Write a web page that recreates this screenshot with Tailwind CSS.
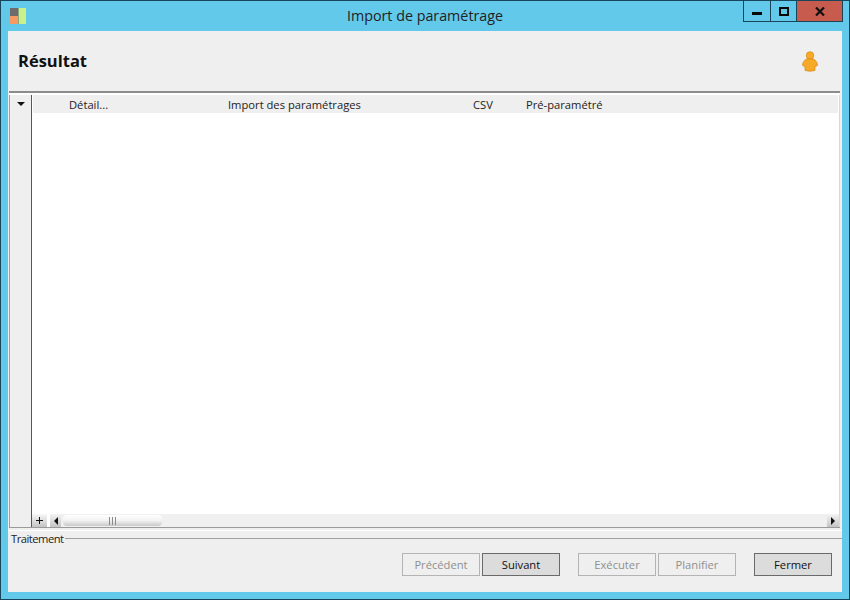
<!DOCTYPE html>
<html lang="fr">
<head>
    <meta charset="UTF-8">
    <script src="https://cdn.jsdelivr.net/npm/@tailwindcss/browser@4"></script>
    <title>Import de paramétrage</title>
</head>
<body class="bg-[#63c9ea] overflow-hidden">
    <div class="w-[850px] h-[600px] flex flex-col bg-[#63c9ea] border border-[#17455a] font-['Open_Sans','Noto_Sans',sans-serif] text-[#111]">

        <!-- title bar -->
        <div class="h-[30px] shrink-0 grid grid-cols-[1fr_auto_1fr] items-start">
            <div class="pl-[8px] pt-[6px]">
                <svg width="18" height="18" viewBox="0 0 18 18">
                    <rect x="1" y="1" width="8" height="8" fill="#6d6b6b"/>
                    <rect x="1" y="9" width="8" height="8" fill="#f59a62"/>
                    <rect x="9" y="1" width="8" height="16" fill="#c8f08c"/>
                    <rect x="9" y="1" width="1" height="16" fill="#86a878"/>
                </svg>
            </div>
            <p class="text-[14.3px] leading-[19px] pt-[5px] text-[#222]">Import de paramétrage</p>
            <div class="flex justify-end pr-[6px]">
                <div class="flex h-[21px] border border-t-0 border-[#17455a]">
                    <div class="w-[27px] border-r border-[#17455a] flex items-center justify-center">
                        <div class="w-[10px] h-[3px] bg-[#0a0a0a] mt-[4px]"></div>
                    </div>
                    <div class="w-[26px] border-r border-[#17455a] flex items-center justify-center">
                        <div class="w-[10px] h-[9px] border-2 border-[#0a0a0a] mt-[1px]"></div>
                    </div>
                    <div class="w-[45px] bg-[#c75b4e] flex items-center justify-center">
                        <svg width="10" height="9" viewBox="0 0 10 9"><path d="M1 0.5 L9 8.5 M9 0.5 L1 8.5" stroke="#111" stroke-width="2.2" fill="none"/></svg>
                    </div>
                </div>
            </div>
        </div>

        <!-- client area -->
        <div class="flex-1 mx-[7px] mb-[7px] bg-[#efefef] flex flex-col min-h-0">

            <!-- header -->
            <div class="h-[60px] shrink-0 flex items-center justify-between pl-[10px] pr-[24px]">
                <p class="text-[16.5px] font-bold leading-[22px] mt-[-1px] text-[#111]">Résultat</p>
                <svg width="16" height="21" viewBox="0 0 16 21">
                    <circle cx="8" cy="4.5" r="3.8" fill="#f7a928" stroke="#d68a1a" stroke-width="0.7"/>
                    <path d="M4.5 8 H11.5 C13.5 9 15.5 11.5 15.5 14 C15.5 15 14 15.5 13 15 V19.5 Q8 21 3 19.5 V15 C2 15.5 .5 15 .5 14 C.5 11.5 2.5 9 4.5 8 Z" fill="#f7a928" stroke="#d68a1a" stroke-width="0.7"/>
                </svg>
            </div>

            <!-- grid -->
            <div class="flex-1 min-h-0 flex flex-col border-t-2 border-[#8c8c8c] ml-[1px] mr-[2px] bg-white">
                <div class="flex-1 min-h-0 flex pt-[2px]">
                    <div class="w-[23px] shrink-0 bg-[#efefef] border-r border-[#55595c] border-l border-l-[#a0a0a0] flex justify-center pt-[7px]">
                        <div class="w-0 h-[4px] border-x-[4px] border-x-transparent border-t-[4px] border-t-[#111]"></div>
                    </div>
                    <div class="flex-1 min-w-0 flex flex-col">
                        <div class="h-[18px] ml-[1px] mr-[1px] pt-[1px] bg-[#efefef] flex text-[11.2px] leading-[18px] text-[#222]">
                            <span class="w-[195px] pl-[36px]">Détail...</span>
                            <span class="w-[245px]">Import des paramétrages</span>
                            <span class="w-[53px]">CSV</span>
                            <span>Pré-paramétré</span>
                        </div>
                        <div class="flex-1"></div>
                        <div class="h-[13px] flex items-stretch bg-[#f0f0f0]">
                            <div class="w-[15px] shrink-0 bg-gradient-to-b from-[#f8f8f8] to-[#c4c4c4] flex items-center justify-center">
                                <svg width="7" height="7" viewBox="0 0 7 7"><path d="M3.5 0 V7 M0 3.5 H7" stroke="#111" stroke-width="1" fill="none"/></svg>
                            </div>
                            <div class="w-[3px] shrink-0 bg-white"></div>
                            <div class="w-[11px] shrink-0 bg-gradient-to-b from-[#f4f4f4] to-[#c4c4c4] flex items-center justify-center">
                                <div class="w-0 h-0 border-y-[4px] border-y-transparent border-r-[4px] border-r-[#111]"></div>
                            </div>
                            <div class="w-[2px] shrink-0"></div>
                            <div class="w-[99px] shrink-0 my-[1px] rounded-[4px] bg-gradient-to-b from-white via-[#f2f2f2] to-[#c8c8c8] flex items-center justify-center gap-[2px]">
                                <span class="w-px h-[8px] bg-[#8a8a8a]"></span><span class="w-px h-[8px] bg-[#8a8a8a]"></span><span class="w-px h-[8px] bg-[#8a8a8a]"></span>
                            </div>
                            <div class="flex-1"></div>
                            <div class="w-[12px] shrink-0 bg-gradient-to-b from-[#f4f4f4] to-[#c4c4c4] flex items-center justify-center">
                                <div class="w-0 h-0 border-y-[4px] border-y-transparent border-l-[4px] border-l-[#111]"></div>
                            </div>
                        </div>
                    </div>
                    <div class="w-px shrink-0 bg-[#d8d8d8]"></div>
                </div>
            </div>

            <div class="h-px shrink-0 bg-[#9a9a9a] ml-[1px] mr-[2px]"></div>
            <div class="h-[2px] shrink-0"></div>
            <div class="h-px shrink-0 bg-white"></div>

            <!-- Traitement -->
            <div class="h-[61px] shrink-0">
                <div class="flex items-center h-[14px]">
                    <span class="text-[11.2px] tracking-[-0.5px] leading-[14px] pl-[3px] pr-px pt-[2px] text-[#222]">Traitement</span>
                    <div class="flex-1 h-px bg-[#a0a0a0]"></div>
                </div>
                <div class="flex justify-end pr-[10px] mt-[8px] text-[11.2px]">
                    <button class="w-[78px] h-[23px] pt-[1px] border border-[#b4b4b4] text-[#8f8f8f]">Précédent</button>
                    <button class="w-[78px] h-[23px] pt-[1px] ml-[2px] border border-[#6a6a6a] bg-[#dcdcdc] text-[#111]">Suivant</button>
                    <button class="w-[78px] h-[23px] pt-[1px] ml-[18px] border border-[#b4b4b4] text-[#8f8f8f]">Exécuter</button>
                    <button class="w-[78px] h-[23px] pt-[1px] ml-[2px] border border-[#b4b4b4] text-[#8f8f8f]">Planifier</button>
                    <button class="w-[78px] h-[23px] pt-[1px] ml-[18px] border border-[#6a6a6a] bg-[#dcdcdc] text-[#111]">Fermer</button>
                </div>
            </div>
        </div>
    </div>
</body>
</html>
